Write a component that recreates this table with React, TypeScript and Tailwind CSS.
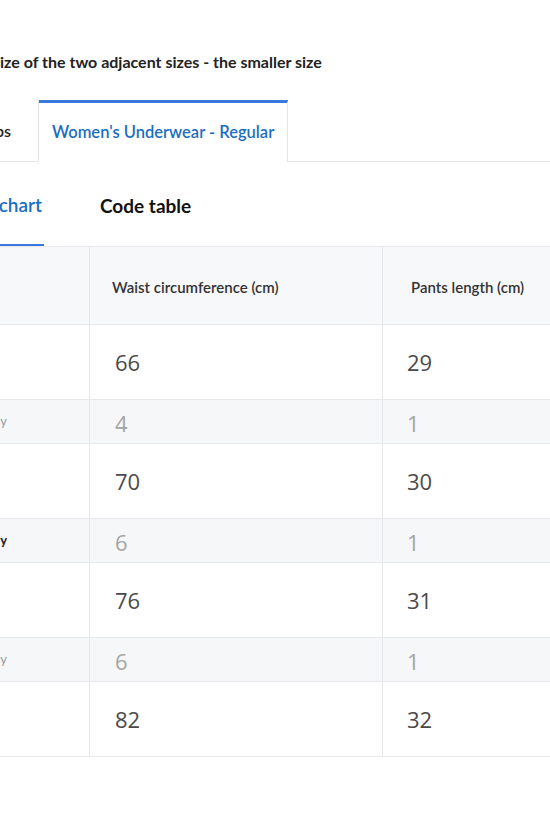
import React from 'react';

interface SizeRow {
  label: string;
  waist: string;
  length: string;
  diffLabel?: string;
  diffBold?: boolean;
  diffWaist?: string;
  diffLength?: string;
}

const rows: SizeRow[] = [
  { label: 'S', waist: '66', length: '29', diffLabel: 'Adjacent difference only', diffWaist: '4', diffLength: '1' },
  { label: 'M', waist: '70', length: '30', diffLabel: 'Adjacent difference only', diffBold: true, diffWaist: '6', diffLength: '1' },
  { label: 'L', waist: '76', length: '31', diffLabel: 'Adjacent difference only', diffWaist: '6', diffLength: '1' },
  { label: 'XL', waist: '82', length: '32' },
];

const lato = "font-['Lato','Liberation_Sans',sans-serif]";
const num = "font-['Open_Sans','Noto_Sans',sans-serif]";

const App: React.FC = () => {
  return (
    <div className="w-[550px] h-[825px] overflow-hidden bg-white">
      <div className={`w-[820px] ml-[-200px] ${lato}`}>
        <p className="pt-[52px] h-[72px] whitespace-nowrap text-[16px] font-bold text-[#222] leading-[20px]">
          <span className="inline-block w-[200px] text-right">choose the s</span>ize of the two adjacent sizes - the smaller size
        </p>

        {/* tabs */}
        <div className="mt-[28px] flex h-[62px]">
          <div className="w-[239px] flex items-center justify-end pr-[27px] border-r border-b border-[#e3e5e8] text-[16px] font-semibold text-[#222]">
            Tops
          </div>
          <div className="flex items-center px-[13px] pb-[1px] border-t-[3px] border-t-[#3a78dc] border-r border-r-[#e3e5e8] text-[16.5px] font-semibold text-[#1b6ec2]">
            Women's Underwear - Regular
          </div>
          <div className="flex-1 border-b border-[#e3e5e8]" />
        </div>

        {/* sub tabs */}
        <div className="flex h-[85px] border-b border-[#e6e8eb]">
          <div className="w-[244px] flex justify-end">
            <div className="flex items-center pr-[2px] pl-4 pt-1 border-b-2 border-[#3a78dc] text-[19px] font-semibold text-[#1b6ec2]">
              Size chart
            </div>
          </div>
          <div className="ml-[56px] pt-1 flex items-center text-[19px] font-bold text-[#111]">Code table</div>
        </div>

        {/* table */}
        <div className="text-[#333]">
          <div className="flex h-[78px] bg-[#f7f8fa] border-b border-[#e6e8eb]">
            <div className="w-[290px] border-r border-[#e6e8eb]" />
            <div className="w-[293px] flex items-center pl-[22px] pt-1 border-r border-[#e6e8eb] text-[15px] font-semibold">
              Waist circumference (cm)
            </div>
            <div className="flex-1 flex items-center pl-[28px] pt-1 text-[15px] font-semibold">Pants length (cm)</div>
          </div>

          {rows.map((r) => (
            <React.Fragment key={r.label}>
              <div className="flex h-[75px] border-b border-[#e6e8eb]">
                <div className="w-[290px] border-r border-[#e6e8eb] flex items-center pl-6 text-[13px] text-[#333]">{r.label}</div>
                <div className={`w-[293px] flex items-center pl-[25px] border-r border-[#e6e8eb] text-[22px] text-[#4a4a4a] ${num}`}>
                  {r.waist}
                </div>
                <div className={`flex-1 flex items-center pl-[24px] text-[22px] text-[#4a4a4a] ${num}`}>{r.length}</div>
              </div>
              {r.diffWaist && (
                <div className="flex h-[44px] bg-[#f6f7f9] border-b border-[#e6e8eb]">
                  <div className="w-[290px] border-r border-[#e6e8eb] flex items-center">
                    <div
                      className={`w-[207px] whitespace-nowrap overflow-hidden text-right text-[13px] ${
                        r.diffBold ? 'font-bold text-[#222]' : 'text-[#9a9a9a]'
                      }`}
                    >
                      {r.diffLabel}
                    </div>
                  </div>
                  <div className={`w-[293px] flex items-center pl-[25px] pt-1 border-r border-[#e6e8eb] text-[22px] text-[#a5a5a5] ${num}`}>
                    {r.diffWaist}
                  </div>
                  <div className={`flex-1 flex items-center pl-[24px] pt-1 text-[22px] text-[#a5a5a5] ${num}`}>{r.diffLength}</div>
                </div>
              )}
            </React.Fragment>
          ))}
        </div>
      </div>
    </div>
  );
};

export default App;
